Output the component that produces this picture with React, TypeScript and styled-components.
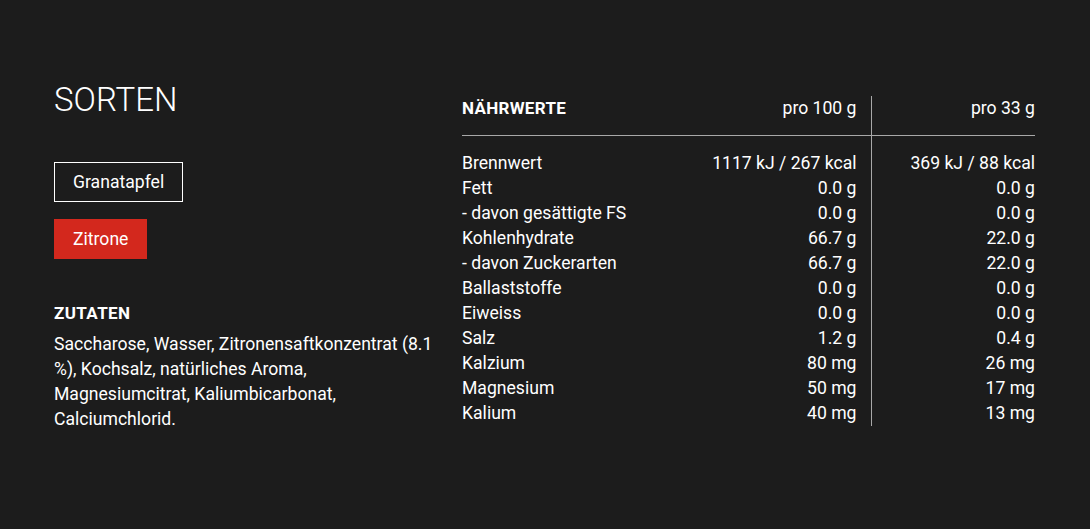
import React from 'react';
import styled, { createGlobalStyle } from 'styled-components';

const GlobalStyle = createGlobalStyle`
  html, body {
    margin: 0;
    padding: 0;
    background-color: #1c1c1c;
  }
  body {
    font-family: Roboto, 'Liberation Sans', Arial, sans-serif;
    color: #fff;
  }
`;

const Page = styled.div`
  box-sizing: border-box;
  width: 1090px;
  height: 529px;
  padding: 80px 55px 0 54px;
  display: grid;
  grid-template-columns: 380px 1fr;
  column-gap: 28px;
`;

const Side = styled.div`
  display: flex;
  flex-direction: column;
  align-items: flex-start;
`;

const Heading = styled.h2`
  margin: 0 0 42px;
  font-weight: 300;
  font-size: 33px;
  line-height: 40px;
`;

const Variants = styled.div`
  display: flex;
  flex-direction: column;
  align-items: flex-start;
  gap: 17px;
`;

const Variant = styled.button<{ $active?: boolean }>`
  box-sizing: border-box;
  height: 40px;
  padding: 0 18px;
  font-family: inherit;
  font-size: 17.6px;
  color: #fff;
  cursor: pointer;
  background-color: ${p => (p.$active ? '#d3281d' : 'transparent')};
  border: 1px solid ${p => (p.$active ? '#d3281d' : '#fff')};
`;

const Subheading = styled.h3`
  margin: 42px 0 7px;
  font-size: 17px;
  font-weight: 700;
  letter-spacing: 0.4px;
  line-height: 24px;
`;

const Ingredients = styled.p`
  margin: 0;
  font-size: 17.6px;
  line-height: 25px;
`;

const Table = styled.table`
  border-collapse: collapse;
  width: 573px;
  margin-top: 16px;
  align-self: start;
  font-size: 17.6px;
  line-height: 25px;
`;

const Th = styled.th<{ $split?: boolean }>`
  padding: 0 0 14px;
  text-align: ${p => (p.$split === undefined ? 'left' : 'right')};
  font-weight: ${p => (p.$split === undefined ? 700 : 400)};
  font-size: ${p => (p.$split === undefined ? '17px' : 'inherit')};
  letter-spacing: ${p => (p.$split === undefined ? '0.3px' : '0')};
  border-bottom: 1px solid #a8a8a8;
  border-left: ${p => (p.$split ? '1px solid #a8a8a8' : 'none')};
  padding-right: ${p => (p.$split === false ? '14px' : '0')};
`;

const Td = styled.td<{ $num?: boolean; $split?: boolean; $first?: boolean }>`
  padding: ${p => (p.$first ? '15px' : '0')} 0 0;
  text-align: ${p => (p.$num ? 'right' : 'left')};
  padding-right: ${p => (p.$num && !p.$split ? '14px' : '0')};
  border-left: ${p => (p.$split ? '1px solid #a8a8a8' : 'none')};
  white-space: nowrap;
`;

const rows: [string, string, string][] = [
  ['Brennwert', '1117 kJ / 267 kcal', '369 kJ / 88 kcal'],
  ['Fett', '0.0 g', '0.0 g'],
  ['- davon gesättigte FS', '0.0 g', '0.0 g'],
  ['Kohlenhydrate', '66.7 g', '22.0 g'],
  ['- davon Zuckerarten', '66.7 g', '22.0 g'],
  ['Ballaststoffe', '0.0 g', '0.0 g'],
  ['Eiweiss', '0.0 g', '0.0 g'],
  ['Salz', '1.2 g', '0.4 g'],
  ['Kalzium', '80 mg', '26 mg'],
  ['Magnesium', '50 mg', '17 mg'],
  ['Kalium', '40 mg', '13 mg'],
];

export default function App() {
  return (
    <>
      <GlobalStyle />
      <Page>
        <Side>
          <Heading>SORTEN</Heading>
          <Variants>
            <Variant>Granatapfel</Variant>
            <Variant $active>Zitrone</Variant>
          </Variants>
          <Subheading>ZUTATEN</Subheading>
          <Ingredients>
            Saccharose, Wasser, Zitronensaftkonzentrat (8.1 %), Kochsalz, natürliches Aroma,
            Magnesiumcitrat, Kaliumbicarbonat, Calciumchlorid.
          </Ingredients>
        </Side>
        <Table>
          <colgroup>
            <col />
            <col style={{ width: 200 }} />
            <col style={{ width: 164 }} />
          </colgroup>
          <thead>
            <tr>
              <Th>NÄHRWERTE</Th>
              <Th $split={false}>pro 100 g</Th>
              <Th $split>pro 33 g</Th>
            </tr>
          </thead>
          <tbody>
            {rows.map(([label, a, b], i) => (
              <tr key={label}>
                <Td $first={i === 0}>{label}</Td>
                <Td $first={i === 0} $num>{a}</Td>
                <Td $first={i === 0} $num $split>{b}</Td>
              </tr>
            ))}
          </tbody>
        </Table>
      </Page>
    </>
  );
}
